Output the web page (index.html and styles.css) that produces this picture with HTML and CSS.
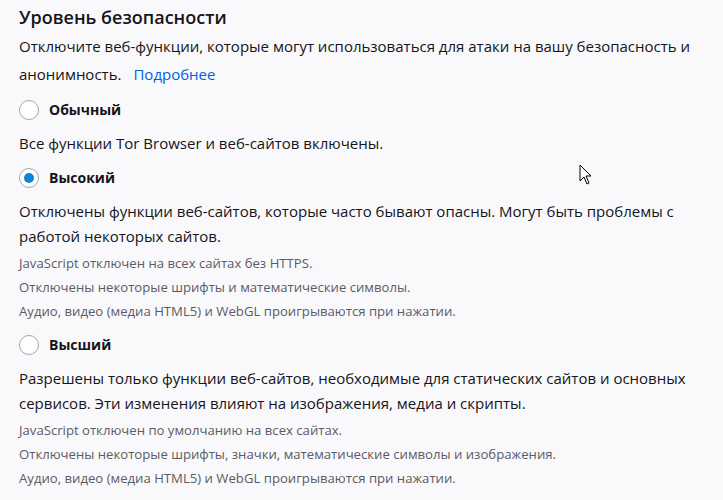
FILE: index.html
```html
<!DOCTYPE html>
<html lang="ru">
<head>
<meta charset="utf-8">
<link rel="stylesheet" href="styles.css">
</head>
<body>
<section class="security">
  <h2 class="title">Уровень безопасности</h2>
  <p class="intro">Отключите веб-функции, которые могут использоваться для атаки на вашу безопасность и анонимность.<a class="link" href="#">Подробнее</a></p>

  <div class="level">
    <label class="option"><span class="radio"></span><span class="name">Обычный</span></label>
    <p class="desc">Все функции Tor Browser и веб-сайтов включены.</p>
  </div>

  <div class="level">
    <label class="option"><span class="radio checked"></span><span class="name">Высокий</span></label>
    <p class="desc">Отключены функции веб-сайтов, которые часто бывают опасны. Могут быть проблемы с работой некоторых сайтов.</p>
    <ul class="details">
      <li>JavaScript отключен на всех сайтах без HTTPS.</li>
      <li>Отключены некоторые шрифты и математические символы.</li>
      <li>Аудио, видео (медиа HTML5) и WebGL проигрываются при нажатии.</li>
    </ul>
  </div>

  <div class="level">
    <label class="option"><span class="radio"></span><span class="name">Высший</span></label>
    <p class="desc">Разрешены только функции веб-сайтов, необходимые для статических сайтов и основных сервисов. Эти изменения влияют на изображения, медиа и скрипты.</p>
    <ul class="details">
      <li>JavaScript отключен по умолчанию на всех сайтах.</li>
      <li>Отключены некоторые шрифты, значки, математические символы и изображения.</li>
      <li>Аудио, видео (медиа HTML5) и WebGL проигрываются при нажатии.</li>
    </ul>
  </div>
</section>
<svg class="cursor" width="14" height="22" viewBox="0 0 14 22"><path d="M1 1 L1 17 L5 13 L8 20 L10 19 L7 12 L12 12 Z" fill="#fff" stroke="#000" stroke-width="1"/></svg>
</body>
</html>
```

FILE: styles.css
```css
html, body {
  margin: 0;
  padding: 0;
  background: #f9f9fb;
}
body {
  font-family: "Open Sans", "Noto Sans", sans-serif;
  color: #15141a;
  width: 723px;
  height: 500px;
  overflow: hidden;
  position: relative;
}
.security {
  padding: 2px 0 0 19px;
}
.title {
  font-size: 18px;
  font-weight: 600;
  margin: 0;
  line-height: 30px;
}
.intro {
  margin: 0;
  font-size: 15px;
  line-height: 28px;
  width: 680px;
}
.link {
  color: #0061e0;
  text-decoration: none;
  margin-left: 12px;
}
.level {
  display: flex;
  flex-direction: column;
}
.option {
  display: flex;
  align-items: center;
  gap: 10px;
  height: 43px;
}
.radio {
  width: 20px;
  height: 20px;
  border: 1px solid #a4a4ad;
  border-radius: 50%;
  background: #fff;
  box-sizing: border-box;
  display: flex;
  align-items: center;
  justify-content: center;
}
.radio.checked::after {
  content: "";
  width: 10px;
  height: 10px;
  border-radius: 50%;
  background: #0a84d8;
}
.name {
  font-weight: 700;
  font-size: 14px;
}
.desc {
  margin: 0;
  font-size: 15px;
  line-height: 25px;
  width: 680px;
}
.details {
  list-style: none;
  margin: 0;
  padding: 2px 0 0;
  font-size: 13.15px;
  line-height: 24px;
  color: #5b5b66;
}
.cursor {
  position: absolute;
  left: 579px;
  top: 164px;
}
```
